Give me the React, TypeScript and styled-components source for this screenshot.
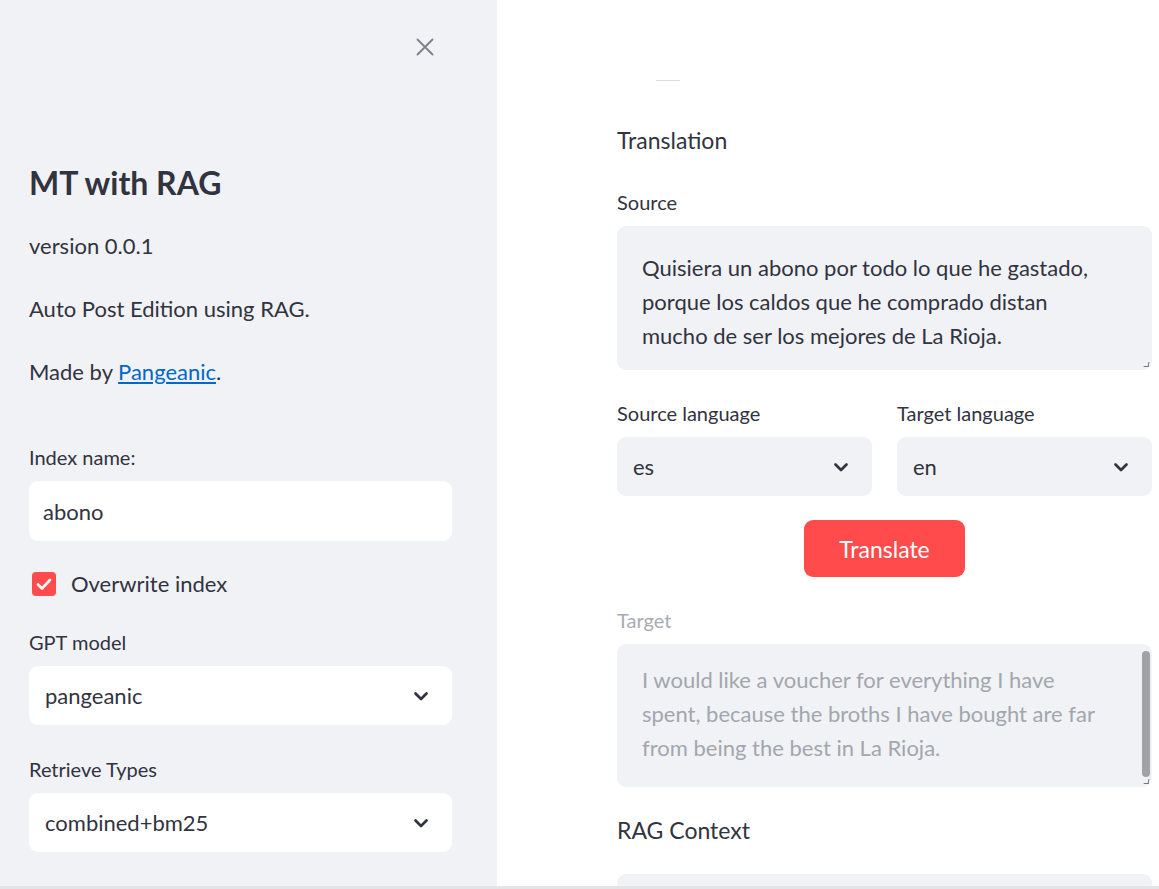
import styled, { createGlobalStyle } from 'styled-components';

const GlobalStyle = createGlobalStyle`
  html, body {
    margin: 0;
    padding: 0;
    background: #ffffff;
  }
  body {
    font-family: Lato, "Liberation Sans", sans-serif;
    color: #31333f;
  }
`;

// the text areas wrap at these points in the original layout
const SOURCE_TEXT = `Quisiera un abono por todo lo que he gastado,
porque los caldos que he comprado distan
mucho de ser los mejores de La Rioja.`;
const TARGET_TEXT = `I would like a voucher for everything I have
spent, because the broths I have bought are far
from being the best in La Rioja.`;

function Chevron() {
  return (
    <svg width="16" height="10" viewBox="0 0 16 10" fill="none">
      <path d="M2.5 2.5l5.5 5.5 5.5-5.5" stroke="#31333f" strokeWidth="2.7" strokeLinecap="round" strokeLinejoin="round" />
    </svg>
  );
}

function CloseIcon() {
  return (
    <svg width="18" height="18" viewBox="0 0 18 18" fill="none">
      <path d="M1.5 1.5l15 15M16.5 1.5l-15 15" stroke="#7d7f86" strokeWidth="1.8" strokeLinecap="round" />
    </svg>
  );
}

function SelectBox({ value, tone }: { value: string; tone: 'white' | 'grey' }) {
  return (
    <Select $tone={tone}>
      <span>{value}</span>
      <Chevron />
    </Select>
  );
}

export default function App() {
  return (
    <>
      <GlobalStyle />
      <Page>
        <Sidebar>
          <SidebarHeader>
            <CloseButton>
              <CloseIcon />
            </CloseButton>
          </SidebarHeader>

          <Title>MT with RAG</Title>
          <Paragraph>version 0.0.1</Paragraph>
          <Paragraph>Auto Post Edition using RAG.</Paragraph>
          <Paragraph>
            Made by <Link href="#">Pangeanic</Link>.
          </Paragraph>

          <Field $top={56}>
            <Label>Index name:</Label>
            <TextInput>abono</TextInput>
          </Field>

          <CheckRow>
            <CheckBox>
              <svg width="16" height="13" viewBox="0 0 16 13" fill="none">
                <path d="M2 6.5l4 4 8-8.5" stroke="#fff" strokeWidth="2.6" strokeLinecap="round" strokeLinejoin="round" />
              </svg>
            </CheckBox>
            <CheckLabel>Overwrite index</CheckLabel>
          </CheckRow>

          <Field $top={34}>
            <Label>GPT model</Label>
            <SelectBox value="pangeanic" tone="white" />
          </Field>

          <Field $top={32}>
            <Label>Retrieve Types</Label>
            <SelectBox value="combined+bm25" tone="white" />
          </Field>
        </Sidebar>

        <Main>
          <Column>
            <Divider />
            <SectionTitle $top={43}>Translation</SectionTitle>

            <Field $top={34}>
              <Label>Source</Label>
              <TextArea $padTop={25} $height={144}>
                {SOURCE_TEXT}
              </TextArea>
            </Field>

            <LanguageRow>
              <Field $top={0}>
                <Label>Source language</Label>
                <SelectBox value="es" tone="grey" />
              </Field>
              <Field $top={0}>
                <Label>Target language</Label>
                <SelectBox value="en" tone="grey" />
              </Field>
            </LanguageRow>

            <ButtonRow>
              <TranslateButton>Translate</TranslateButton>
            </ButtonRow>

            <Field $top={31}>
              <Label $disabled>Target</Label>
              <TextArea $padTop={19} $height={143} $disabled>
                {TARGET_TEXT}
                <ScrollThumb />
              </TextArea>
            </Field>

            <SectionTitle $top={27}>RAG Context</SectionTitle>
            <ContextBox />
          </Column>
        </Main>
      </Page>
    </>
  );
}

const Page = styled.div`
  display: flex;
  height: 886px;
  overflow: hidden;
  border-bottom: 3px solid #e4e4e6;
`;

const Sidebar = styled.aside`
  width: 497px;
  flex-shrink: 0;
  box-sizing: border-box;
  background: #f0f2f6;
  padding: 0 45px 0 29px;
  display: flex;
  flex-direction: column;
`;

const SidebarHeader = styled.div`
  display: flex;
  justify-content: flex-end;
  padding: 38px 18px 0 0;
  height: 18px;
`;

const CloseButton = styled.div`
  width: 18px;
  height: 18px;
  cursor: pointer;
`;

const Title = styled.h1`
  margin: 106px 0 0;
  font-size: 32px;
  line-height: 42px;
  font-weight: 700;
  color: #31333f;
`;

const Paragraph = styled.p`
  margin: 0;
  font-size: 22px;
  line-height: 34px;
  color: #31333f;
  & + & {
    margin-top: 29px;
  }
  h1 + & {
    margin-top: 25px;
  }
`;

const Link = styled.a`
  color: #0068c9;
  text-decoration: underline;
`;

const Field = styled.div<{ $top: number }>`
  display: flex;
  flex-direction: column;
  gap: 12px;
  margin-top: ${(p) => p.$top}px;
`;

const Label = styled.label<{ $disabled?: boolean }>`
  font-size: 20px;
  line-height: 24px;
  color: ${(p) => (p.$disabled ? '#a9abb2' : '#31333f')};
`;

const TextInput = styled.div`
  height: 60px;
  box-sizing: border-box;
  background: #ffffff;
  border-radius: 9px;
  padding: 0 14px;
  display: flex;
  align-items: center;
  font-size: 22px;
  color: #31333f;
`;

const CheckRow = styled.div`
  display: flex;
  align-items: center;
  gap: 15px;
  margin-top: 31px;
  padding-left: 3px;
`;

const CheckBox = styled.div`
  width: 24px;
  height: 24px;
  border-radius: 4px;
  background: #ff4b4b;
  display: flex;
  align-items: center;
  justify-content: center;
`;

const CheckLabel = styled.span`
  font-size: 22px;
  line-height: 24px;
  color: #31333f;
`;

const Select = styled.div<{ $tone: 'white' | 'grey' }>`
  height: 59px;
  box-sizing: border-box;
  border-radius: 9px;
  background: ${(p) => (p.$tone === 'white' ? '#ffffff' : '#f0f2f6')};
  padding: 0 23px 0 16px;
  display: flex;
  align-items: center;
  justify-content: space-between;
  font-size: 22px;
  color: #31333f;
`;

const Main = styled.main`
  flex: 1;
  background: #ffffff;
  padding: 0 7px 0 120px;
`;

const Column = styled.div`
  width: 535px;
  display: flex;
  flex-direction: column;
`;

const Divider = styled.div`
  width: 24px;
  height: 1px;
  background: #dcdcdf;
  margin: 80px 0 0 39px;
`;

const SectionTitle = styled.h3<{ $top: number }>`
  margin: ${(p) => p.$top}px 0 0;
  font-size: 23px;
  line-height: 32px;
  font-weight: 400;
  color: #31333f;
`;

const TextArea = styled.div<{ $disabled?: boolean; $padTop: number; $height: number }>`
  position: relative;
  height: ${(p) => p.$height}px;
  box-sizing: border-box;
  background: #f0f2f6;
  border-radius: 9px;
  padding: ${(p) => p.$padTop}px 14px 0 25px;
  font-size: 22px;
  line-height: 33.8px;
  white-space: pre-line;
  color: ${(p) => (p.$disabled ? '#a3a6ad' : '#31333f')};
  &::after {
    content: '';
    position: absolute;
    right: 3px;
    bottom: 3px;
    width: 4px;
    height: 4px;
    border-right: 1px solid #777;
    border-bottom: 1px solid #777;
    transform: skew(-10deg);
  }
`;

const ScrollThumb = styled.div`
  position: absolute;
  right: 2px;
  top: 7px;
  bottom: 10px;
  width: 8px;
  border-radius: 4px;
  background: #a2a2a4;
`;

const LanguageRow = styled.div`
  display: grid;
  grid-template-columns: 1fr 1fr;
  gap: 25px;
  margin-top: 31px;
`;

const ButtonRow = styled.div`
  display: flex;
  justify-content: center;
  margin-top: 24px;
`;

const TranslateButton = styled.button`
  width: 161px;
  height: 57px;
  border: none;
  border-radius: 9px;
  background: #ff4b4b;
  color: #ffffff;
  font-family: Lato, "Liberation Sans", sans-serif;
  font-size: 23px;
  cursor: pointer;
`;

const ContextBox = styled.div`
  margin-top: 28px;
  height: 80px;
  border-radius: 9px;
  background: #f0f2f6;
  flex-shrink: 0;
`;
